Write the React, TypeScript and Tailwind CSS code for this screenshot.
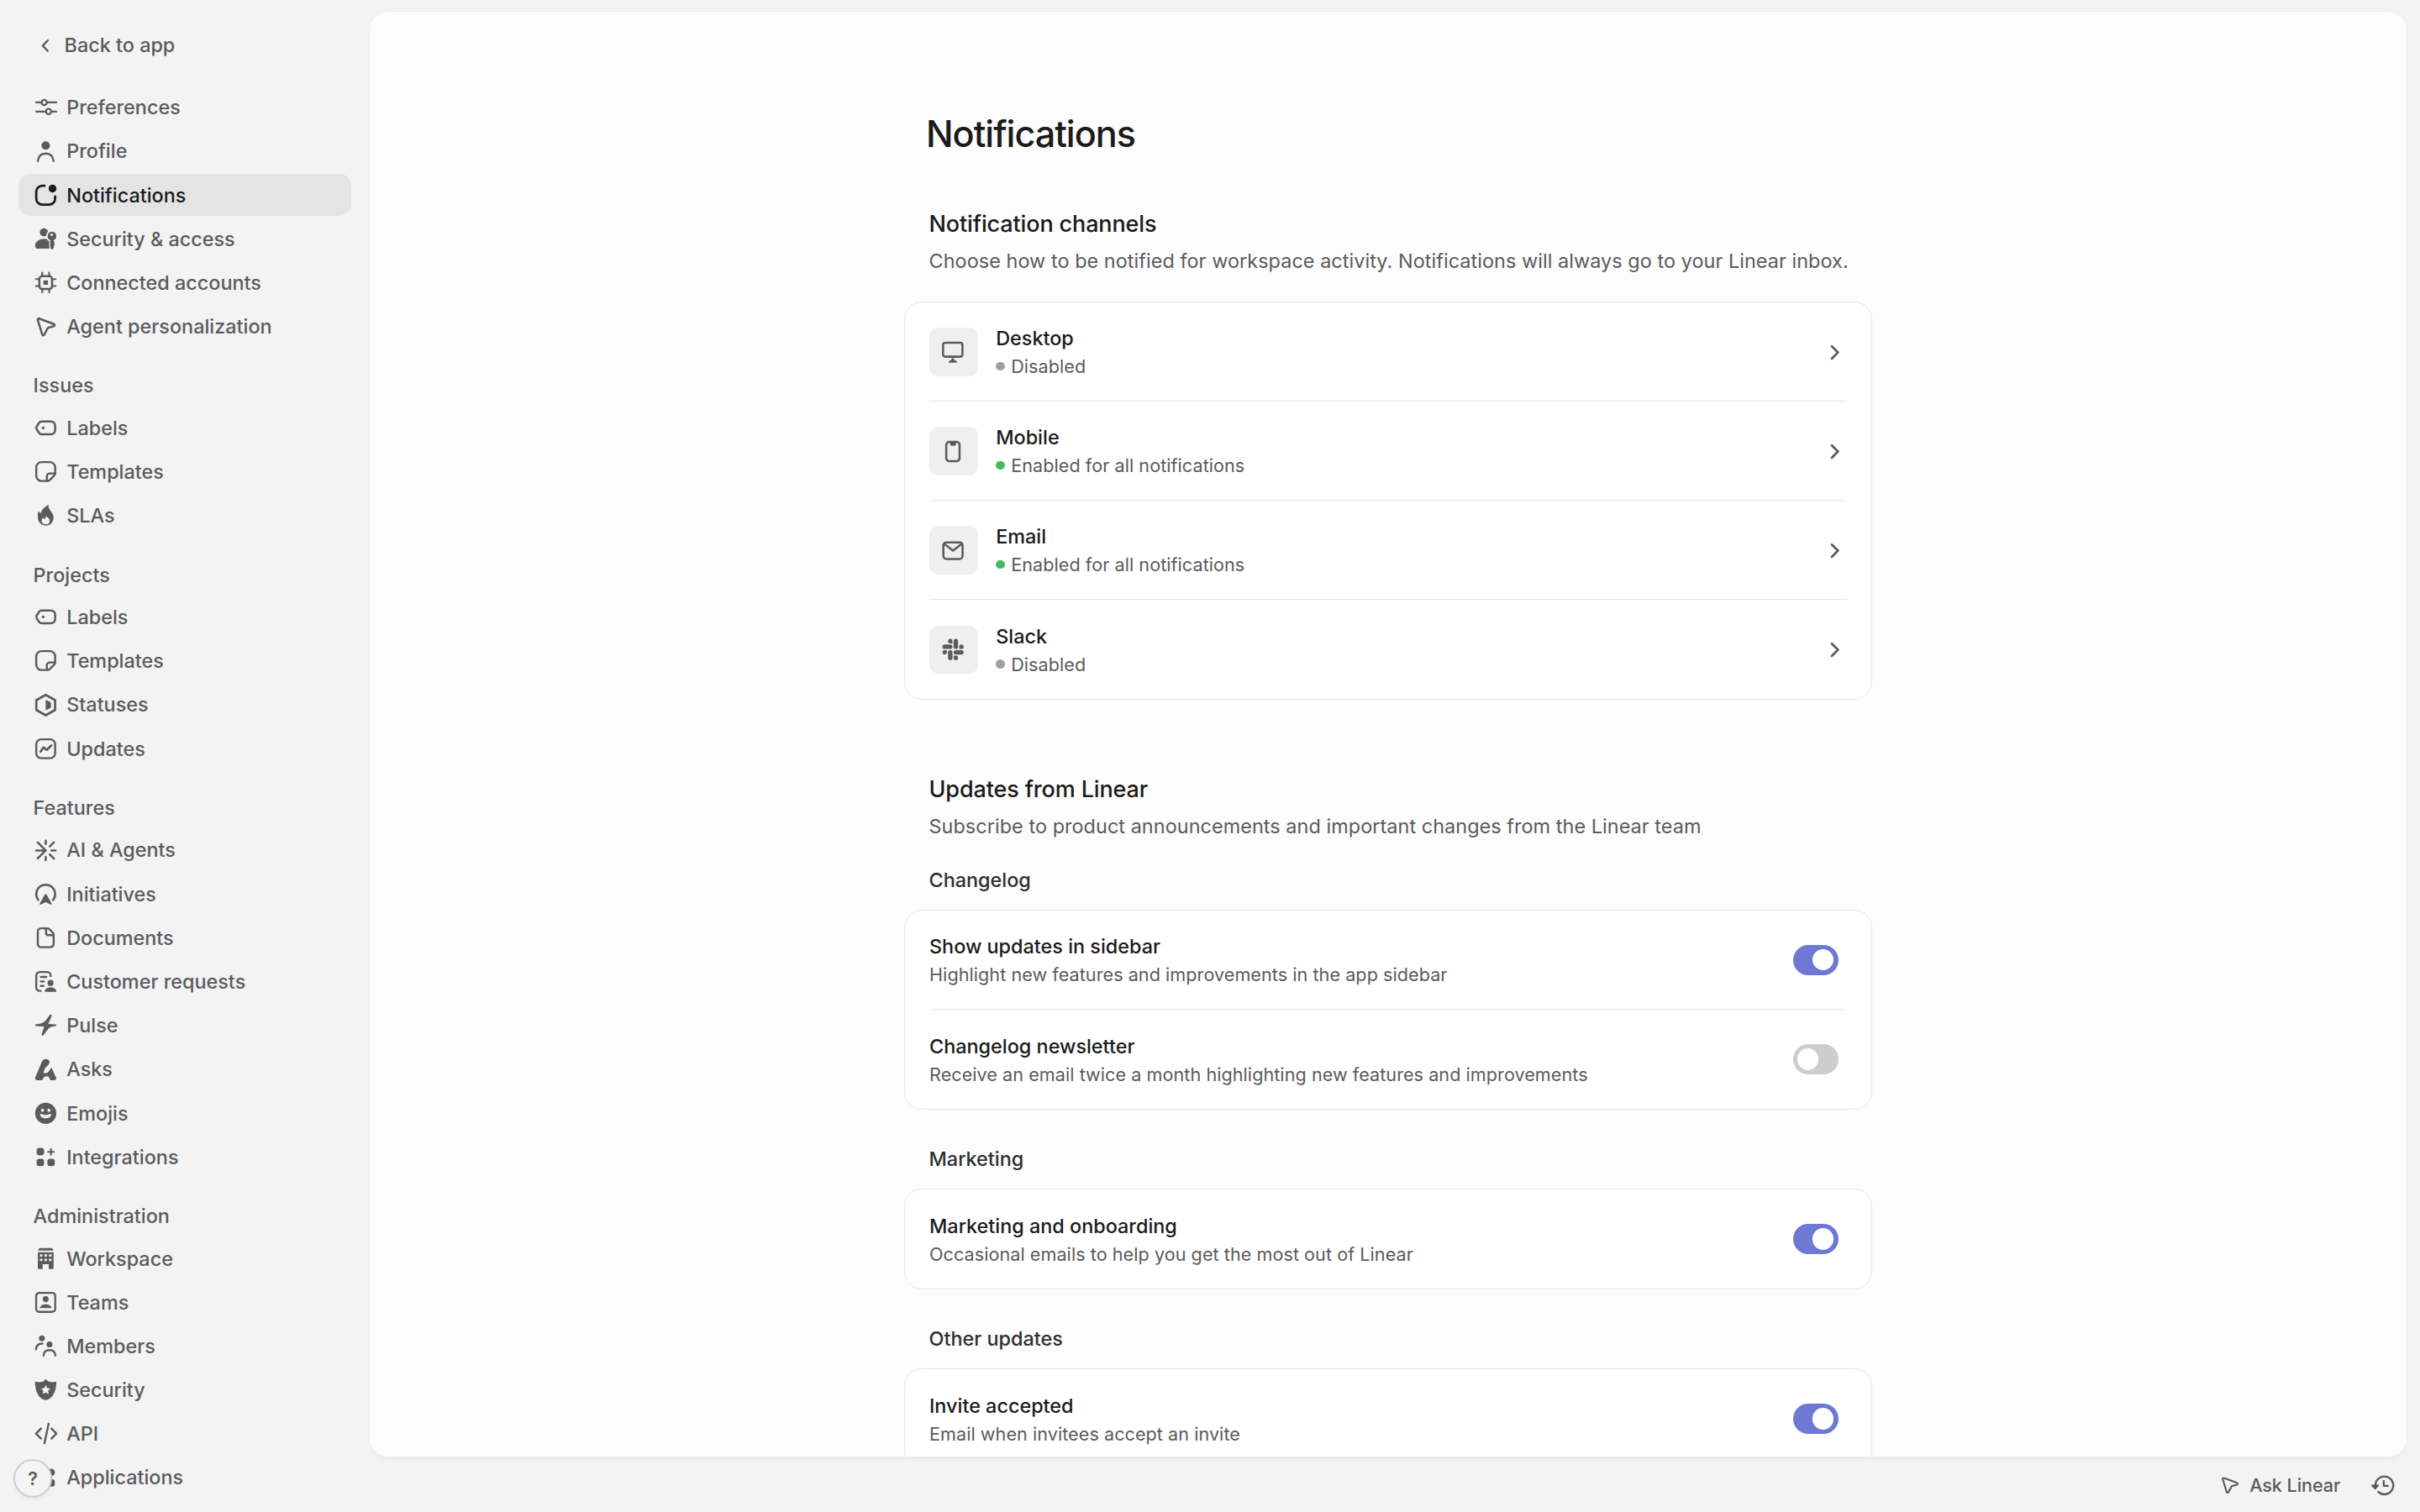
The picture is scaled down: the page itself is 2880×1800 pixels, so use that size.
import { type ReactNode } from "react";

type IconProps = { children: ReactNode; className?: string };

const Icon = ({ children, className = "size-[28.8px]" }: IconProps) => (
  <svg
    viewBox="0 0 16 16"
    className={`shrink-0 ${className}`}
    fill="none"
    stroke="currentColor"
    strokeWidth="1.5"
    strokeLinecap="round"
    strokeLinejoin="round"
  >
    {children}
  </svg>
);

const solid = { fill: "currentColor", stroke: "none" };

const icons = {
  preferences: (
    <g strokeWidth="1.25">
      <path d="M1.7 4.95h3.6M9 4.95h6M1.7 11h6.4M11.7 11H15" />
      <circle cx="7" cy="4.95" r="1.75" />
      <circle cx="9.9" cy="11" r="1.75" />
    </g>
  ),
  profile: (
    <>
      <circle cx="8" cy="4" r="2.8" {...solid} />
      <path d="M2.8 14.4c.4-3.3 2.1-5.1 5.2-5.1s4.8 1.8 5.2 5.1" strokeWidth="1.3" />
    </>
  ),
  notifications: (
    <>
      <path d="M7.25 1.75h-1.5a4 4 0 0 0-4 4v4.5a4 4 0 0 0 4 4h4.5a4 4 0 0 0 4-4V8.75" />
      <circle cx="12.5" cy="3.6" r="2.6" {...solid} />
    </>
  ),
  access: (
    <>
      <circle cx="6.8" cy="3.7" r="2.7" {...solid} />
      <path
        d="M6.8 7.9c1.5 0 2.7.4 3.5 1.2v5.4H3c-1.3 0-2-.8-2-1.9C1 9.9 3.5 7.9 6.8 7.9Z"
        {...solid}
      />
      <circle cx="12" cy="6.2" r="3.8" fill="#f3f3f3" stroke="none" />
      <path
        d="M12 3.2a3 3 0 0 1 1.3 5.7v.6l.7.7-.6.8.6.9-.7.9v1.1l-1.1 1.2-1.2-1.1V8.9A3 3 0 0 1 12 3.2Zm0 1.3a.8.8 0 1 0 0 1.600.8.8 0 0 0 0-1.600Z"
        fillRule="evenodd"
        {...solid}
      />
    </>
  ),
  chip: (
    <g strokeWidth="1.4">
      <rect x="3.8" y="3.8" width="8.4" height="8.4" rx="1.8" />
      <rect x="6.5" y="6.5" width="3" height="3" rx=".4" {...solid} />
      <path
        d="M5.7 1.5v1.8M10.3 1.5v1.8M5.7 12.7v1.8M10.3 12.7v1.8M1.5 5.7h1.8M1.5 10.3h1.8M12.7 5.7h1.8M12.7 10.3h1.8"
        strokeWidth="1.2"
      />
    </g>
  ),
  cursor: (
    <path
      d="M3.6 2.9 13.4 6.5c.7.3.7 1.1.1 1.4L10 8.9c-.5.200-.8.400-1 .9l-2 3.800c-.4.600-1.200.5-1.300-.2L2.700 3.800c-.1-.6.300-1.100.9-.9Z"
      strokeWidth="1.4"
    />
  ),
  label: (
    <>
      <path
        d="M5.3 3.75h6.2a2.75 2.75 0 0 1 2.75 2.75v3a2.75 2.75 0 0 1-2.75 2.75H5.3a2 2 0 0 1-1.6-.8L2.05 8.9a1.5 1.5 0 0 1 0-1.8L3.7 4.55a2 2 0 0 1 1.6-.8Z"
        strokeWidth="1.4"
      />
      <circle cx="6.3" cy="8" r=".95" {...solid} />
    </>
  ),
  template: (
    <g strokeWidth="1.35">
      <path d="M9.2 14.25H5.25a3.5 3.5 0 0 1-3.5-3.5v-5.5a3.5 3.5 0 0 1 3.5-3.5h5.5a3.5 3.5 0 0 1 3.5 3.5v3.95a2 2 0 0 1-.6 1.4l-3.05 3.05a2 2 0 0 1-1.4.6Z" />
      <path d="M8.75 14v-2.75a2 2 0 0 1 2-2H14" />
    </g>
  ),
  flame: (
    <path
      d="M9.8 1c-.1 2.2.8 3.3 1.9 4.7 1 1.3 1.5 2.4 1.5 3.7 0 3.2-2.3 5.4-5.2 5.4s-5.2-2.2-5.2-5.3c0-1.4-.1-2.5.2-4 .8.2 1.3.7 1.8 1.3C5.2 4.3 7.4 2.5 9.8 1ZM8.3 8.3c-.2 1.1-.6 1.900-1.200 2.300-.4-.3-.6-.6-.8-1-.7.700-1 1.300-1 2.100 0 1.400 1.200 2.300 2.700 2.300s2.700-.9 2.700-2.400c0-1.400-1.500-1.900-2.400-3.300Z"
      fillRule="evenodd"
      {...solid}
    />
  ),
  status: (
    <>
      <path d="M8 1.25 14.2 4.75v6.5L8 14.75 1.8 11.25v-6.5Z" />
      <path d="M8 4.5l2.7 1.4c.5.3.8.7.8 1.2v1.8c0 .5-.3.9-.8 1.2L8 11.5Z" {...solid} />
    </>
  ),
  updates: (
    <>
      <rect x="1.75" y="1.75" width="12.5" height="12.5" rx="3.25" strokeWidth="1.35" />
      <path d="M4.6 9.9 6.6 7.1l2.1 1.6 3-2.9" />
    </>
  ),
  agents: (
    <path
      d="M1.7 8H8M2.7 2.7 8 8l-5.3 5.3M8 1.6v2.2M8 12.2v2.2M11.8 8h2.7M13.4 2.6l-2.7 2.7M13.4 13.4l-2.7-2.7"
      strokeWidth="1.4"
    />
  ),
  initiatives: (
    <>
      <path d="M3.1 11.9a6.25 6.25 0 1 1 9.8 0" strokeWidth="1.4" />
      <path
        d="M7.5 8.2c.2-.4.8-.4 1 0l3.4 5.9c.3.5-.2 1-.7.8L8 13.4l-3.2 1.5c-.5.2-1-.3-.7-.8Z"
        {...solid}
      />
    </>
  ),
  document: (
    <g strokeWidth="1.35">
      <path d="M5 1.75h4.1a2 2 0 0 1 1.5.7l2.1 2.3a2 2 0 0 1 .55 1.4V12A2.25 2.25 0 0 1 11 14.25H5A2.25 2.25 0 0 1 2.75 12V4A2.25 2.25 0 0 1 5 1.75Z" />
      <path d="M8.25 2v3a1.25 1.25 0 0 0 1.25 1.25H13" />
    </g>
  ),
  requests: (
    <>
      <path
        d="M11.25 4.5V4A2.25 2.25 0 0 0 9 1.75H4A2.25 2.25 0 0 0 1.75 4v8A2.25 2.25 0 0 0 4 14.25h.6M4.8 5h3.6M4.8 8h2M4.8 11h1.7"
        strokeWidth="1.35"
      />
      <circle cx="11.2" cy="9" r="2" {...solid} />
      <path d="M7.4 14.8c0-1.8 1.7-2.8 3.8-2.8s3.8 1 3.8 2.8Z" {...solid} />
    </>
  ),
  pulse: (
    <path
      d="M11.7 1.1c.4.2.4.6.2 1L9.7 7.2l4.8.3c.7.1.7 1 0 1.1-2.7.3-4.3.9-5.4 2.5l-2.5 3.5c-.5.7-1.6.3-1.3-.6L7 8.9 1.5 8.6c-.7-.1-.7-1 0-1.1 3-.3 5-.8 6.5-2.6l2.6-3.5c.3-.4.7-.5 1.1-.3Z"
      {...solid}
    />
  ),
  asks: (
    <path
      d="M5.5 2.7C6 1.6 6.9 1 8 1c1.600 0 2.800 1.200 2.500 2.500C10.200 5.200 7.800 6 7.200 8c-.2.900-.4 1.400-.9 2 1.500.6 2.900.3 3.700-.9l1.800-2.600 3 6.500c.5 1 0 2-1.100 2h-1.900c-.7 0-1-.4-1.200-1-.3-1-.9-1.700-2-1.700-1.300 0-1.900.6-2.300 1.700-.3.700-.7 1-1.400 1H2.200c-1 0-1.500-.9-1.100-1.900Z"
      {...solid}
    />
  ),
  emoji: (
    <>
      <circle cx="8" cy="8" r="7" {...solid} />
      <g fill="#f3f3f3" stroke="none">
        <rect x="5" y="5" width="1.8" height="1.9" rx=".7" />
        <rect x="9.2" y="5" width="1.8" height="1.9" rx=".7" />
        <path d="M4.3 8.8c0-.4.4-.6.8-.4 1.9 1 3.9 1 5.8 0 .4-.2.8 0 .8.4-.2 1.6-1.7 2.6-3.7 2.6s-3.5-1-3.7-2.6Z" />
      </g>
    </>
  ),
  integrations: (
    <>
      <rect x="2" y="2" width="4.9" height="4.9" rx="1.7" {...solid} />
      <rect x="2" y="9.1" width="4.9" height="4.9" rx="1.7" {...solid} />
      <rect x="9.1" y="9.1" width="4.9" height="4.9" rx="1.7" {...solid} />
      <path d="M11.5 2.7v3.8M9.6 4.6h3.8" strokeWidth="1.2" />
    </>
  ),
  workspace: (
    <path
      d="M4.7 1h6.6c.9 0 1.7.7 1.7 1.7H3C3 1.7 3.8 1 4.7 1ZM2.8 3.7h10.4V14.9h-3.2V11.7H6v3.2H2.8ZM4.2 5.1V6.7h1.6V5.1ZM7.2 5.1V6.7h1.6V5.1ZM10.2 5.1V6.7h1.6V5.1ZM4.2 8V9.6h1.6V8ZM7.2 8V9.6h1.6V8ZM10.2 8V9.6h1.6V8Z"
      fillRule="evenodd"
      {...solid}
    />
  ),
  teams: (
    <>
      <rect x="1.7" y="1.7" width="12.6" height="12.6" rx="2" strokeWidth="1.3" />
      <circle cx="8" cy="5.9" r="1.95" {...solid} />
      <path d="M4.1 11.8c.1-1.5 1.7-2.5 3.9-2.5s3.8 1 3.9 2.5Z" {...solid} />
    </>
  ),
  members: (
    <>
      <circle cx="5.5" cy="2.9" r="1.95" {...solid} />
      <circle cx="10.5" cy="6.9" r="1.95" {...solid} />
      <path
        d="M1.6 10.2c.1-2.3 1.6-3.8 4.3-3.8M6.6 14.3c.1-2.3 1.5-3.6 3.9-3.6s3.8 1.3 3.9 3.6"
        strokeWidth="1.3"
      />
    </>
  ),
  shield: (
    <path
      d="M8 1c1 1.3 2.3 2 3.9 2 1.1 0 1.9-.1 3.1-.3C15.2 8.5 12.5 14.8 8 14.8S.8 8.5 1 2.7c1.2.2 2 .3 3.1.3C5.7 3 7 2.3 8 1Zm0 3.900-.95 2-2.150.3 1.550 1.500-.4 2.200L8 9.900l1.950 1-.4-2.200 1.550-1.500-2.150-.3Z"
      fillRule="evenodd"
      {...solid}
    />
  ),
  code: (
    <path
      d="M4.9 4.8 1.6 8.1l3.3 3.3M11.8 4.8l3.3 3.3-3.3 3.3M9.9 1.7 7.2 14.5"
      strokeWidth="1.35"
    />
  ),
  applications: (
    <>
      <circle cx="4.4" cy="4.4" r="2.5" {...solid} />
      <circle cx="11.6" cy="4.4" r="2.5" {...solid} />
      <circle cx="4.4" cy="11.6" r="2.5" {...solid} />
      <rect x="9.1" y="8.9" width="4.9" height="4.9" rx="1.7" {...solid} />
    </>
  ),
  desktop: (
    <>
      <rect x="1.3" y="1.7" width="12.8" height="9.2" rx="1.5" strokeWidth="1.4" />
      <path
        d="M6.8 12h1.8v1l1.5.8c.5.3.4 1.1-.2 1.1H5.5c-.6 0-.7-.8-.2-1.1L6.8 13Z"
        {...solid}
      />
    </>
  ),
  mobile: (
    <>
      <rect x="3.4" y="1.7" width="8.8" height="12.8" rx="2" strokeWidth="1.4" />
      <path d="M5.9 2h4v1.1c0 .7-.5 1.2-1.2 1.2H7.1c-.7 0-1.2-.5-1.2-1.2Z" {...solid} />
    </>
  ),
  email: (
    <g strokeWidth="1.4">
      <rect x="1.5" y="2.6" width="12.7" height="11" rx="2" />
      <path d="M2.3 3.8 7.85 8l5.55-4.2" />
    </g>
  ),
  slack: (
    <path
      transform="translate(.9 .9) scale(.583)"
      d="M5.042 15.165a2.528 2.528 0 0 1-2.52 2.523A2.528 2.528 0 0 1 0 15.165a2.527 2.527 0 0 1 2.522-2.52h2.52v2.52zM6.313 15.165a2.527 2.527 0 0 1 2.521-2.52 2.527 2.527 0 0 1 2.521 2.52v6.313A2.528 2.528 0 0 1 8.834 24a2.528 2.528 0 0 1-2.521-2.522v-6.313zM8.834 5.042a2.528 2.528 0 0 1-2.521-2.52A2.528 2.528 0 0 1 8.834 0a2.528 2.528 0 0 1 2.521 2.522v2.52H8.834zM8.834 6.313a2.528 2.528 0 0 1 2.521 2.521 2.528 2.528 0 0 1-2.521 2.521H2.522A2.528 2.528 0 0 1 0 8.834a2.528 2.528 0 0 1 2.522-2.521h6.312zM18.956 8.834a2.528 2.528 0 0 1 2.522-2.521A2.528 2.528 0 0 1 24 8.834a2.528 2.528 0 0 1-2.522 2.521h-2.522V8.834zM17.688 8.834a2.528 2.528 0 0 1-2.523 2.521 2.527 2.527 0 0 1-2.52-2.521V2.522A2.527 2.527 0 0 1 15.165 0a2.528 2.528 0 0 1 2.523 2.522v6.312zM15.165 18.956a2.528 2.528 0 0 1 2.523 2.522A2.528 2.528 0 0 1 15.165 24a2.527 2.527 0 0 1-2.52-2.522v-2.522h2.52zM15.165 17.688a2.527 2.527 0 0 1-2.52-2.523 2.526 2.526 0 0 1 2.52-2.52h6.313A2.527 2.527 0 0 1 24 15.165a2.528 2.528 0 0 1-2.522 2.523h-6.313z"
      {...solid}
    />
  ),
  history: (
    <>
      <path d="M3.3 7.6a5.9 5.9 0 1 1 1.9 4.7" strokeWidth="1.35" />
      <path
        d="M.9 7.5h4.4c.4 0 .6.4.3.7L3.5 10.5c-.2.2-.5.2-.7 0L.6 8.2c-.3-.3-.1-.7.3-.7Z"
        {...solid}
      />
      <path d="M8.8 5v3.3h2.7" strokeWidth="1.3" />
    </>
  ),
};

type IconName = keyof typeof icons;

const topItems: [IconName, string][] = [
  ["preferences", "Preferences"],
  ["profile", "Profile"],
  ["notifications", "Notifications"],
  ["access", "Security & access"],
  ["chip", "Connected accounts"],
  ["cursor", "Agent personalization"],
];

const groups: { title: string; items: [IconName, string][] }[] = [
  {
    title: "Issues",
    items: [
      ["label", "Labels"],
      ["template", "Templates"],
      ["flame", "SLAs"],
    ],
  },
  {
    title: "Projects",
    items: [
      ["label", "Labels"],
      ["template", "Templates"],
      ["status", "Statuses"],
      ["updates", "Updates"],
    ],
  },
  {
    title: "Features",
    items: [
      ["agents", "AI & Agents"],
      ["initiatives", "Initiatives"],
      ["document", "Documents"],
      ["requests", "Customer requests"],
      ["pulse", "Pulse"],
      ["asks", "Asks"],
      ["emoji", "Emojis"],
      ["integrations", "Integrations"],
    ],
  },
  {
    title: "Administration",
    items: [
      ["workspace", "Workspace"],
      ["teams", "Teams"],
      ["members", "Members"],
      ["shield", "Security"],
      ["code", "API"],
      ["applications", "Applications"],
    ],
  },
];

const channels: { icon: IconName; name: string; enabled: boolean }[] = [
  { icon: "desktop", name: "Desktop", enabled: false },
  { icon: "mobile", name: "Mobile", enabled: true },
  { icon: "email", name: "Email", enabled: true },
  { icon: "slack", name: "Slack", enabled: false },
];

const NavItem = ({ icon, label }: { icon: IconName; label: string }) => {
  const active = label === "Notifications";
  return (
    <a
      className={`mb-[1.8px] flex h-[50.4px] items-center gap-[10.8px] rounded-[14.4px] pl-[18px] ${
        active ? "bg-[#e4e4e4] text-[#1b1b1b]" : ""
      }`}
    >
      <Icon>{icons[icon]}</Icon>
      {label}
    </a>
  );
};

const Sidebar = () => (
  <nav className="flex w-[440px] shrink-0 flex-col overflow-hidden pr-[22px] pl-[21.6px] text-[23.4px] font-medium text-[#5b5b5d]">
    <a className="mt-[34px] flex h-10 items-center pl-[17px]">
      <Icon>
        <path d="M9.9 4.5 6.6 8l3.3 3.5" strokeWidth="1.3" />
      </Icon>
      <span className="ml-[9.2px]">Back to app</span>
    </a>
    <div className="mt-[28.6px]">
      {topItems.map(([icon, label]) => (
        <NavItem key={label} icon={icon} label={label} />
      ))}
    </div>
    {groups.map((group) => (
      <div key={group.title} className="mt-[18px]">
        <h3 className="flex h-[50.6px] items-center pl-[18px]">{group.title}</h3>
        {group.items.map(([icon, label]) => (
          <NavItem key={label} icon={icon} label={label} />
        ))}
      </div>
    ))}
  </nav>
);

const Card = ({ children }: { children: ReactNode }) => (
  <div className="rounded-[21.6px] border border-[#e6e6e6] bg-white px-[29px]">{children}</div>
);

const Row = ({ children }: { children: ReactNode }) => (
  <div className="flex h-[118px] items-center border-b border-[#e6e6e6] last:border-b-0">
    {children}
  </div>
);

const Toggle = ({ on }: { on: boolean }) => (
  <span
    className={`mr-[10px] flex h-9 w-[54px] items-center rounded-full ${
      on ? "justify-end bg-[#6e79d6] pr-1.5" : "bg-[#cdcdcd] pl-[5px]"
    }`}
  >
    <span className="size-[25.2px] rounded-full bg-white" />
  </span>
);

const RowText = ({ title, children }: { title: string; children: ReactNode }) => (
  <div className="flex-1 pt-px">
    <p className="text-[23.4px] leading-[34px] font-medium text-[#1b1b1b]">{title}</p>
    <div className="flex items-center gap-[7.2px] text-[21.6px] leading-8 tracking-[0.05px] text-[#5b5b5d]">
      {children}
    </div>
  </div>
);

const SettingRow = ({ title, text, on }: { title: string; text: string; on: boolean }) => (
  <Row>
    <RowText title={title}>{text}</RowText>
    <Toggle on={on} />
  </Row>
);

const SectionHeader = ({ title, text }: { title: string; text: string }) => (
  <div className="pl-[29.5px]">
    <h2 className="text-[27px] leading-9 font-medium tracking-[-0.13px] text-[#1b1b1b]">
      {title}
    </h2>
    <p className="mt-[10px] text-[23.4px] leading-8 tracking-[0.066px] text-[#5b5b5d]">{text}</p>
  </div>
);

const SubHeader = ({ title }: { title: string }) => (
  <h3 className="mb-[19px] pl-[29.5px] text-[23.4px] leading-8 font-medium text-[#2f2f31]">
    {title}
  </h3>
);

const Content = () => (
  <main className="h-[1720px] overflow-hidden rounded-[21.6px] bg-[#fcfcfc] shadow-[0_0_0_1px_#eeeeee,0_4px_5px_rgba(0,0,0,0.04)]">
    <div className="mx-auto w-[1152px] pt-[119px]">
      <h1 className="pl-[26px] text-[43.2px] leading-[52px] font-medium tracking-[-1.05px] text-[#1b1b1b]">
        Notifications
      </h1>
      <section className="mt-16">
        <SectionHeader
          title="Notification channels"
          text="Choose how to be notified for workspace activity. Notifications will always go to your Linear inbox."
        />
        <div className="mt-8">
          <Card>
            {channels.map((channel) => (
              <Row key={channel.name}>
                <span className="mt-px mr-[21.6px] flex size-[57.6px] items-center justify-center rounded-[10.8px] bg-[#efefef] text-[#5b5b5d]">
                  <Icon>{icons[channel.icon]}</Icon>
                </span>
                <RowText title={channel.name}>
                  <span
                    className={`size-[10.8px] rounded-full ${
                      channel.enabled ? "bg-[#44bb5b]" : "bg-[#a0a0a2]"
                    }`}
                  />
                  {channel.enabled ? "Enabled for all notifications" : "Disabled"}
                </RowText>
                <Icon className="mt-px size-[28.8px] text-[#5b5b5d]">
                  <path d="M6.1 4 10.2 8.100 6.1 12.200" />
                </Icon>
              </Row>
            ))}
          </Card>
        </div>
      </section>
      <section className="mt-[89px]">
        <SectionHeader
          title="Updates from Linear"
          text="Subscribe to product announcements and important changes from the Linear team"
        />
        <div className="mt-8">
          <SubHeader title="Changelog" />
          <Card>
            <SettingRow
              title="Show updates in sidebar"
              text="Highlight new features and improvements in the app sidebar"
              on
            />
            <SettingRow
              title="Changelog newsletter"
              text="Receive an email twice a month highlighting new features and improvements"
              on={false}
            />
          </Card>
        </div>
        <div className="mt-[43px]">
          <SubHeader title="Marketing" />
          <Card>
            <SettingRow
              title="Marketing and onboarding"
              text="Occasional emails to help you get the most out of Linear"
              on
            />
          </Card>
        </div>
        <div className="mt-[43px]">
          <SubHeader title="Other updates" />
          <Card>
            <SettingRow title="Invite accepted" text="Email when invitees accept an invite" on />
          </Card>
        </div>
      </section>
    </div>
  </main>
);

const App = () => (
  <div className="relative flex h-[1800px] w-[2880px] overflow-hidden bg-[#f3f3f3] font-['Inter',sans-serif] antialiased">
    <Sidebar />
    <div className="flex flex-1 flex-col pt-[14px] pr-4">
      <Content />
      <footer className="flex h-[66px] items-center justify-end pt-0.5 pr-[14px] text-[21.6px] font-medium text-[#5b5b5d]">
        <Icon className="size-[25.2px]">{icons.cursor}</Icon>
        <span className="ml-[10.8px] tracking-[-0.08px]">Ask Linear</span>
        <Icon className="ml-[36px] size-[28.8px]">{icons.history}</Icon>
      </footer>
    </div>
    <button className="absolute top-[1737px] left-4 size-[46px] rounded-full border-2 border-[#cfcfcf] bg-[#f4f4f4] text-[21.6px] font-semibold text-[#5b5b5d] shadow-[0_3px_5px_rgba(0,0,0,0.04)]">
      ?
    </button>
  </div>
);

export default App;
